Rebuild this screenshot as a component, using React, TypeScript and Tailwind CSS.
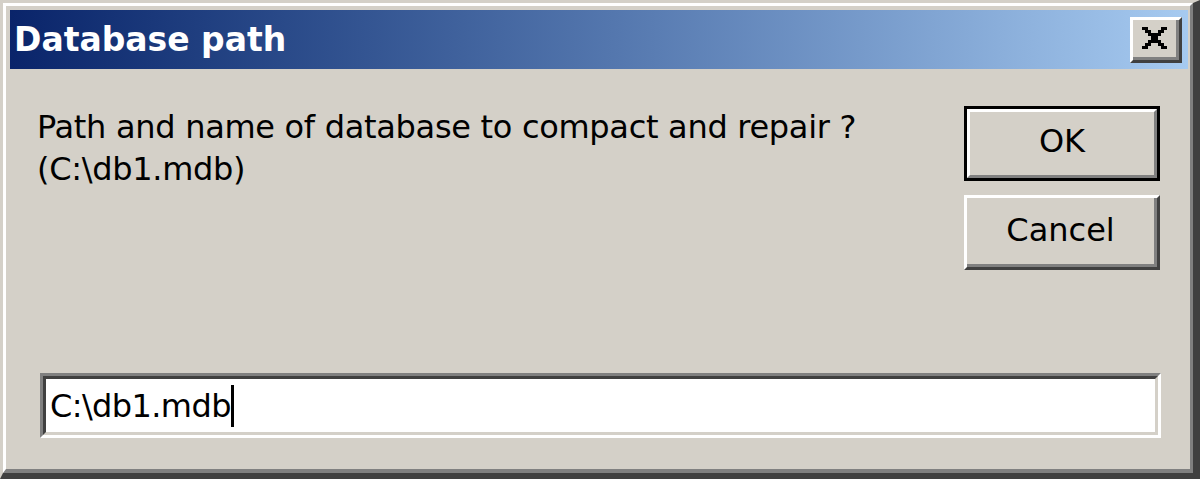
import type { ReactNode } from 'react';

const font = { fontFamily: '"DejaVu Sans", Tahoma, sans-serif' };

// Win classic raised button; the default one gets a black outline around it.
function ClassicButton({ children, isDefault }: { children: ReactNode; isDefault?: boolean }) {
  if (isDefault) {
    return (
      <div className="h-[75px] w-[196px] border-[3px] border-black">
        <div className="flex h-full items-center justify-center border-[3px] border-t-white border-l-white border-r-[#808080] border-b-[#808080] pb-[5px] text-[32px] leading-none text-black">
          {children}
        </div>
      </div>
    );
  }
  return (
    <div className="h-[75px] w-[196px] border-[3px] border-t-white border-l-white border-r-[#404040] border-b-[#404040]">
      <div className="flex h-full items-center justify-center border-r-[3px] border-b-[3px] border-r-[#808080] border-b-[#808080] pb-[3px] text-[32px] leading-none text-black">
        {children}
      </div>
    </div>
  );
}

function CloseGlyph() {
  const cells: [number, number, number][] = [
    [0, 0, 2], [6, 0, 2],
    [1, 1, 2], [5, 1, 2],
    [2, 2, 4],
    [3, 3, 2],
    [2, 4, 4],
    [1, 5, 2], [5, 5, 2],
    [0, 6, 2], [6, 6, 2],
  ];
  return (
    <svg width="27" height="22" viewBox="0 0 8 7" shapeRendering="crispEdges">
      {cells.map(([x, y, w]) => (
        <rect key={`${x}-${y}`} x={x} y={y} width={w} height={1} fill="#000" />
      ))}
    </svg>
  );
}

export default function App() {
  return (
    <div style={font} className="h-[479px] w-[1200px] overflow-hidden bg-[#d4d0c8]">
      <div className="h-full border-t-[3px] border-l-[3px] border-r-[7px] border-b-[6px] border-t-[#d4d0c8] border-l-[#d4d0c8] border-r-[#404040] border-b-[#404040]">
        <div className="flex h-full flex-col border-t-[3px] border-l-[3px] border-r-[3px] border-b-[4px] border-t-white border-l-white border-r-[#808080] border-b-[#808080] bg-[#d4d0c8] pt-[4px] pl-[4px] pr-[2px]">
          {/* title bar */}
          <div className="flex h-[59px] items-center justify-between bg-gradient-to-r from-[#0a246a] to-[#a6caf0] pl-[4px] pr-[6px]">
            <span className="text-[33px] font-bold leading-none text-white">Database path</span>
            <div className="h-[46px] w-[52px] border-[3px] border-t-white border-l-white border-r-[#404040] border-b-[#404040] bg-[#d4d0c8]">
              <div className="flex h-full items-center justify-center border-r-[3px] border-b-[3px] border-r-[#808080] border-b-[#808080] pr-[1px]">
                <CloseGlyph />
              </div>
            </div>
          </div>

          {/* body */}
          <div className="flex flex-col pt-[37px] pl-[27px] pr-[28px]">
            <div className="flex justify-between">
              <p className="text-[32px] leading-[42px] tracking-[-0.3px] text-black">
                Path and name of database to compact and repair ?
                <br />
                (C:\db1.mdb)
              </p>
              <div className="flex flex-col gap-[14px]">
                <ClassicButton isDefault>OK</ClassicButton>
                <ClassicButton>Cancel</ClassicButton>
              </div>
            </div>

            <div className="mt-[103px] mr-[-1px] ml-[3px] h-[65px] border-[3px] border-t-[#808080] border-l-[#808080] border-r-white border-b-white">
              <div className="flex h-full items-center border-[3px] border-t-[#404040] border-l-[#404040] border-r-[#d4d0c8] border-b-[#d4d0c8] bg-white pl-[4px]">
                <span className="text-[32px] leading-none tracking-[-0.6px] text-black">C:\db1.mdb</span>
                <span className="h-[42px] w-[3px] bg-black" />
              </div>
            </div>
          </div>
        </div>
      </div>
    </div>
  );
}
